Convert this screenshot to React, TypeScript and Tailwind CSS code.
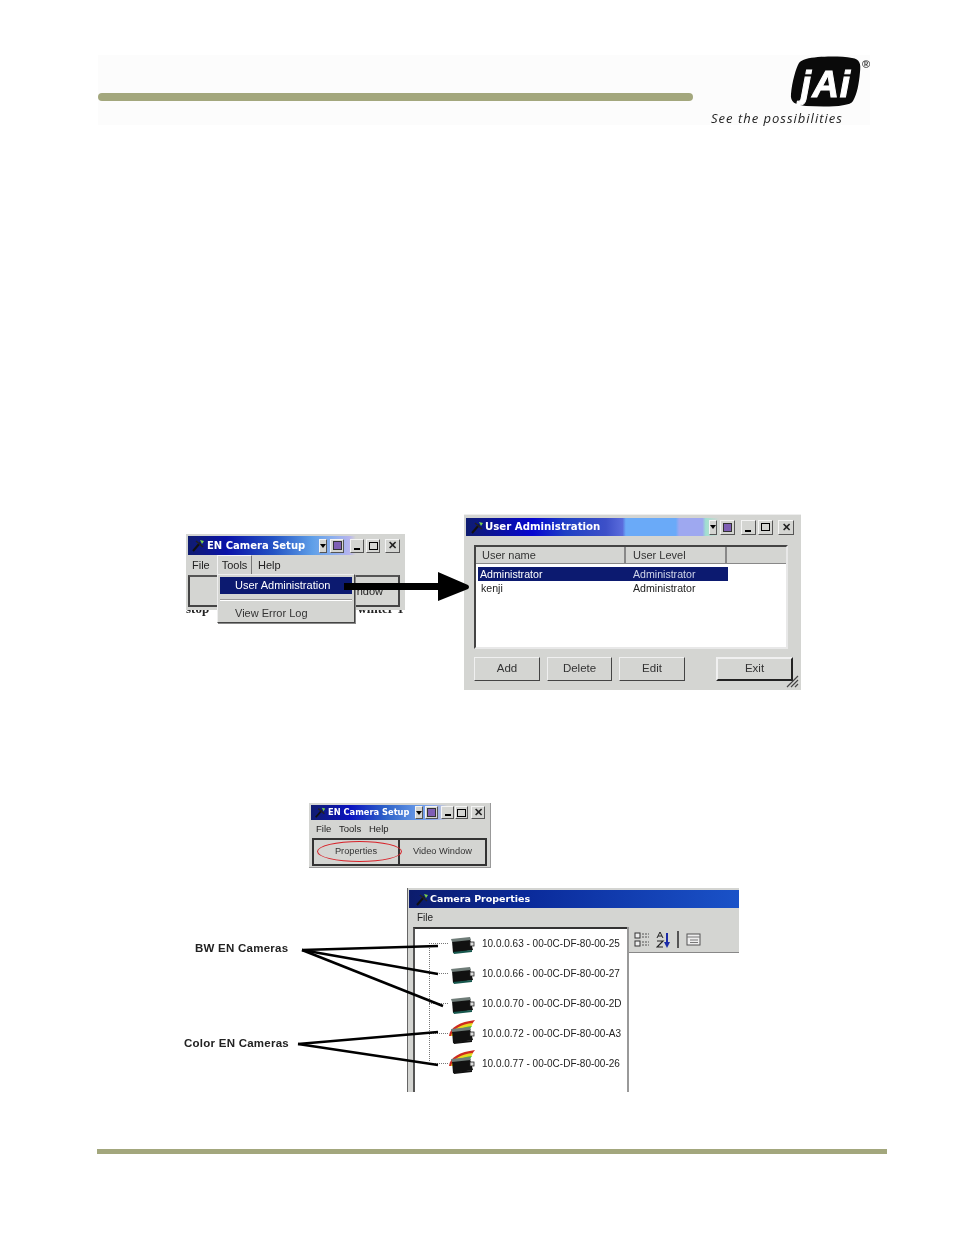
const ui = "font-['Liberation_Sans',Arial,sans-serif]";

function Sys({ small }: { small?: boolean }) {
  return (
    <svg width={small ? 13 : 15} height={small ? 13 : 15} viewBox="0 0 15 15" className="shrink-0">
      <path d="M2 13 L9 5" stroke="#111" strokeWidth="2" />
      <path d="M5 3 L12 9" stroke="#222" strokeWidth="1.6" />
      <path d="M9 2 L13 3 L11 6 Z" fill="#7ad04a" />
    </svg>
  );
}

function Ctl({ kind, w = 14, h = 14 }: { kind: 'min' | 'max' | 'close' | 'menu' | 'tile'; w?: number; h?: number }) {
  return (
    <div
      style={{ width: w, height: h }}
      className="relative flex items-center justify-center bg-[#d4d5d2] border border-t-[#f4f4f4] border-l-[#f4f4f4] border-r-[#555] border-b-[#555]"
    >
      {kind === 'min' && <div className="absolute bottom-[2px] left-[3px] w-[6px] h-[2px] bg-black" />}
      {kind === 'max' && <div className="w-[9px] h-[8px] border border-black" />}
      {kind === 'close' && <span className={`${ui} text-[11px] font-bold leading-none text-[#222]`}>✕</span>}
      {kind === 'menu' && <div className="w-0 h-0 border-x-[3px] border-x-transparent border-t-[4px] border-t-black" />}
      {kind === 'tile' && <div className="w-[9px] h-[9px] bg-[#7f5fb5] border border-[#333]" />}
    </div>
  );
}

function Controls({ size = 14, tight }: { size?: number; tight?: boolean }) {
  return (
    <div className="ml-auto flex items-center">
      <Ctl kind="menu" w={8} h={size} />
      <div className={tight ? 'w-[2px]' : 'w-[3px]'} />
      <Ctl kind="tile" w={size} h={size} />
      <div className={tight ? 'w-[3px]' : 'w-[6px]'} />
      <Ctl kind="min" w={size} h={size} />
      <div className={tight ? 'w-[1px]' : 'w-[2px]'} />
      <Ctl kind="max" w={size} h={size} />
      <div className={tight ? 'w-[3px]' : 'w-[5px]'} />
      <Ctl kind="close" w={size + 1} h={size} />
    </div>
  );
}

function Logo() {
  return (
    <div className="relative w-[80px] h-[52px]">
      <svg width="71" height="52" viewBox="0 0 71 52">
        <path
          d="M16 3 C28 0 50 0 62 2 C70 3 71 8 70 16 C69 28 67 38 63 45 C60 51 36 51 16 50 C5 49 0 46 1 38 C2 26 6 12 9 7 C10 5 13 4 16 3 Z"
          fill="#0a0a0a"
        />
        <text x="36" y="41" textAnchor="middle" fontFamily="'Liberation Sans', Arial, sans-serif" fontStyle="italic" fontWeight="900" fontSize="37" fill="#fff" letterSpacing="1" stroke="#fff" strokeWidth="1">
          jAi
        </text>
      </svg>
      <span className={`${ui} absolute right-0 top-[3px] text-[11px] font-bold leading-none text-[#333]`}>®</span>
    </div>
  );
}

function Header() {
  return (
    <div className="ml-[98px] mt-[55px] w-[772px] h-[70px] bg-[#fcfcfc] flex">
      <div className="w-[595px] pt-[38px]">
        <div className="h-[8px] rounded-full bg-[#a3a77d]" />
      </div>
      <div className="flex-1 relative flex flex-col items-end pt-[1px]">
        <Logo />
        <div className="absolute left-[18px] top-[54px] font-['Open_Sans',sans-serif] italic text-[13px] tracking-[1px] leading-[18px] text-[#222] whitespace-nowrap">
          See the possibilities
        </div>
      </div>
    </div>
  );
}

function SetupWindow() {
  return (
    <div className="relative w-[219px] h-[86px] mt-[20px]">
      <div className={`${ui} w-[219px] h-[76px] bg-[#d4d5d2] pt-[2px] px-[1px] text-[#222]`}>
        <div className="h-[19px] ml-[1px] mr-[1px] flex items-center pl-[3px] pr-[3px] bg-[linear-gradient(90deg,#101c70_0%,#0a12a8_18%,#2454c4_40%,#5f9fe8_58%,#8fb0ee_68%,#b6b4ee_75%,#d4d5d2_78%)]">
          <Sys />
          <span className="ml-[1px] font-['DejaVu_Sans',sans-serif] font-bold text-[10px] text-white whitespace-nowrap">EN Camera Setup</span>
          <Controls />
        </div>
        <div className="flex h-[20px] items-center text-[11px] pl-[5px]">
          <span className="w-[25px]">File</span>
          <span className="w-[35px] h-[20px] flex items-center justify-center border border-t-[#f4f4f4] border-l-[#f4f4f4] border-r-[#777] border-b-transparent">Tools</span>
          <span className="ml-[6px]">Help</span>
        </div>
        <div className="flex ml-[1px] mr-[4px] h-[32px] border-2 border-[#444] border-t-[#555] bg-[#d4d5d2] justify-end items-end pr-[15px] pb-[6px] text-[11px]">
          indow
        </div>
      </div>
      <div className="h-[9px] overflow-hidden">
        <div className="-mt-[8px] font-['Liberation_Serif',serif] font-bold text-[13px] leading-[14px] text-[#222] flex justify-between">
          <span>stop</span>
          <span>winter T</span>
        </div>
      </div>
      <div className={`${ui} absolute left-[31px] top-[40px] w-[138px] h-[49px] bg-[#d4d5d2] border border-[#eee] border-r-[#444] border-b-[#444] p-[2px] text-[11px] text-[#333] shadow-[1px_1px_0_#888]`}>
        <div className="h-[17px] bg-[#0c1a70] text-white pl-[15px] leading-[17px]">User Administration</div>
        <div className="mt-[5px] border-t border-t-[#999] border-b border-b-white" />
        <div className="pl-[15px] mt-[4px]">View Error Log</div>
      </div>
    </div>
  );
}

function UserAdminWindow() {
  const Btn = ({ label, w, exit }: { label: string; w: number; exit?: boolean }) => (
    <div
      style={{ width: w }}
      className={`h-[24px] flex items-center justify-center text-[11.5px] border border-t-[#f0f0f0] border-l-[#f0f0f0] ${exit ? 'border-2 border-[#222] border-t-[#333] border-l-[#333]' : 'border-r-[#444] border-b-[#444]'}`}
    >
      {label}
    </div>
  );
  return (
    <div className={`${ui} relative w-[337px] h-[176px] bg-[#d4d5d2] pt-[3px] px-[2px] text-[#333] border-t border-t-[#eee]`}>
      <div className="h-[18px] flex items-center pl-[4px] pr-[5px] bg-[linear-gradient(90deg,#0e1c70_0%,#0606d0_20%,#1e40c4_30%,#3d50c8_42%,#5a6cdc_47%,#6aaaf8_48%,#6aaaf8_63%,#9ea8f0_64%,#9ea8f0_71%,#a0e0d0_72%,#d4d5d2_76%)]">
        <Sys />
        <span className="font-['DejaVu_Sans',sans-serif] font-bold text-[10.2px] text-white whitespace-nowrap">User Administration</span>
        <Controls size={15} />
      </div>
      <div className="mt-[9px] ml-[8px] w-[314px] h-[104px] bg-white border-2 border-[#444] border-r-[#e8e8e8] border-b-[#e8e8e8]">
        <div className="flex h-[17px] bg-[#d4d5d2] text-[11px] leading-[17px]">
          <div className="w-[150px] pl-[6px] border-r-2 border-r-[#888] border-b border-b-[#888]">User name</div>
          <div className="w-[101px] pl-[7px] border-r-2 border-r-[#888] border-b border-b-[#888]">User Level</div>
          <div className="flex-1 border-b border-b-[#888]" />
        </div>
        <div className="ml-[2px] mt-[3px] w-[250px] h-[14px] bg-[#0c1a70] text-white flex text-[10.6px] leading-[14px]">
          <span className="w-[155px] pl-[2px]">Administrator</span>
          <span className="text-[#cfd4e8]">Administrator</span>
        </div>
        <div className="ml-[2px] h-[14px] flex text-[10.6px] leading-[15px] text-[#222]">
          <span className="w-[155px] pl-[3px]">kenji</span>
          <span>Administrator</span>
        </div>
      </div>
      <div className="flex mt-[8px] ml-[8px]">
        <Btn label="Add" w={66} />
        <div className="w-[7px]" />
        <Btn label="Delete" w={65} />
        <div className="w-[7px]" />
        <Btn label="Edit" w={66} />
        <div className="w-[31px]" />
        <Btn label="Exit" w={77} exit />
      </div>
      <svg className="absolute right-[2px] bottom-[2px]" width="14" height="14" viewBox="0 0 14 14">
        <path d="M13 2 L2 13 M13 6 L6 13 M13 10 L10 13" stroke="#444" strokeWidth="1.2" />
      </svg>
    </div>
  );
}

function SmallSetupWindow() {
  return (
    <div className={`${ui} ml-[309px] mt-[113px] w-[182px] h-[65px] bg-[#d4d5d2] p-[2px] border-r border-b border-r-[#999] border-b-[#999] text-[#222]`}>
      <div className="h-[15px] flex items-center pl-[3px] pr-[3px] bg-[linear-gradient(90deg,#101c70_0%,#0a12c0_22%,#2e62c8_42%,#6a9cea_62%,#8fa8ee_70%,#d4d5d2_77%)]">
        <Sys small />
        <span className="ml-[1px] font-['DejaVu_Sans',sans-serif] font-bold text-[8.3px] text-white whitespace-nowrap">EN Camera Setup</span>
        <Controls size={13} tight />
      </div>
      <div className="flex h-[18px] items-center text-[9.5px] pl-[5px]">
        <span className="w-[23px]">File</span>
        <span className="w-[30px]">Tools</span>
        <span>Help</span>
      </div>
      <div className="relative flex h-[28px] mx-[1px] border-2 border-[#333] text-[9.25px]">
        <div className="w-[86px] flex items-center justify-center border-r-2 border-r-[#333] text-[#333]">Properties</div>
        <div className="flex-1 flex items-center justify-center text-[#333]">Video Window</div>
        <div className="absolute left-[3px] top-[1px] w-[85px] h-[21px] rounded-[50%] border border-[#d8232a]" />
      </div>
    </div>
  );
}

function Camera({ color }: { color?: boolean }) {
  return (
    <svg width="28" height="26" viewBox="0 0 28 26" className="shrink-0">
      {color && (
        <>
          <path d="M1 17 C2 8 12 3 27 1 L24 5 C14 6 7 10 5 17 Z" fill="#d02a1e" />
          <path d="M3 17 C5 10 13 5 25 4 L23 8 C15 9 9 12 7 17 Z" fill="#e8d820" />
          <path d="M5 17 C7 12 14 8 24 7 L21 11 C15 11 11 13 9 17 Z" fill="#3ec43a" />
          <path d="M8 17 C11 13 16 12 21 11 L20 14 C15 14 12 15 11 17 Z" fill="#55a8e0" />
        </>
      )}
      <path d="M4 12 L22 10 L25 21 L5 24 Z" fill="#111" />
      <path d="M3 10 L22 8 L23 11 L4 13 Z" fill="#6f7c78" />
      <path d="M5 23 L24 21 L24 23 L6 25 Z" fill={color ? '#111' : '#17584e'} />
      <rect x="22" y="13" width="4" height="4" fill="#ddd" stroke="#222" strokeWidth="0.8" />
    </svg>
  );
}

const cameras = [
  { label: '10.0.0.63 - 00-0C-DF-80-00-25' },
  { label: '10.0.0.66 - 00-0C-DF-80-00-27' },
  { label: '10.0.0.70 - 00-0C-DF-80-00-2D' },
  { label: '10.0.0.72 - 00-0C-DF-80-00-A3', color: true },
  { label: '10.0.0.77 - 00-0C-DF-80-00-26', color: true },
];

function PropertiesWindow() {
  return (
    <div className={`${ui} w-[332px] h-[204px] shrink-0 bg-[#d4d5d2] border-l border-l-[#666] pl-[1px] pt-[2px] text-[#222] overflow-hidden`}>
      <div className="h-[18px] flex items-center pl-[6px] bg-[linear-gradient(90deg,#0c1c6c_0%,#0a2a9a_35%,#1a52c8_100%)]">
        <Sys />
        <span className="font-['DejaVu_Sans',sans-serif] font-bold text-[9.5px] text-white whitespace-nowrap">Camera Properties</span>
      </div>
      <div className="h-[19px] text-[10px] leading-[19px] pl-[8px]">File</div>
      <div className="flex h-[165px] pl-[4px]">
        <div className="relative w-[214px] bg-white border-t-2 border-l-2 border-t-[#333] border-l-[#555]">
          <div className="absolute left-[14px] top-[16px] h-[116px] border-l border-dotted border-l-[#777]" />
          {cameras.map((c) => (
            <div key={c.label} className="h-[30px] flex items-center pl-[14px] relative -top-[1px]">
              <div className="w-[19px] border-t border-dotted border-t-[#777]" />
              <div className="-mt-[3px]"><Camera color={c.color} /></div>
              <span className="ml-[6px] text-[10px] whitespace-nowrap text-[#222]">{c.label}</span>
            </div>
          ))}
        </div>
        <div className="w-[2px] bg-[#999]" />
        <div className="flex-1 flex flex-col">
          <div className="h-[25px] flex items-center pl-[4px] gap-[5px]">
            <svg width="18" height="18" viewBox="0 0 18 18">
              <rect x="2" y="2" width="5" height="5" fill="#eee" stroke="#333" />
              <rect x="2" y="10" width="5" height="5" fill="#eee" stroke="#333" />
              <path d="M9 3h7M9 6h7M9 11h7M9 14h7" stroke="#555" strokeDasharray="2 1" />
            </svg>
            <svg width="16" height="18" viewBox="0 0 16 18">
              <path d="M4 1 L1 7 M4 1 L7 7 M2 5 H6" stroke="#222" strokeWidth="1" fill="none" />
              <path d="M1 10 H7 L1 16 H7" stroke="#222" strokeWidth="1.2" fill="none" />
              <path d="M11 2 V12" stroke="#1a2aa8" strokeWidth="2" />
              <path d="M8 11 H14 L11 17 Z" fill="#1a2aa8" />
            </svg>
            <div className="w-[2px] h-[17px] bg-[#555]" />
            <svg width="16" height="14" viewBox="0 0 16 14" className="ml-[2px]">
              <rect x="1" y="1" width="13" height="11" fill="#eee" stroke="#555" />
              <path d="M1 4 H14 M4 7 H12 M4 9.5 H12" stroke="#777" />
            </svg>
          </div>
          <div className="flex-1 bg-white border-t border-t-[#888]" />
        </div>
      </div>
    </div>
  );
}

function CameraFigure() {
  return (
    <div className="relative ml-[184px] mt-[20px] w-[555px] h-[204px] flex">
      <div className={`${ui} w-[223px] shrink-0 font-bold text-[11.5px] tracking-[0.25px] text-[#222]`}>
        <div className="mt-[52px] ml-[11px] leading-[16px]">BW EN Cameras</div>
        <div className="mt-[79px] leading-[16px]">Color EN Cameras</div>
      </div>
      <PropertiesWindow />
      {/* leader lines run over both the labels and the window */}
      <svg className="absolute left-0 top-0 pointer-events-none" width="555" height="204" viewBox="0 0 555 204">
        <g stroke="#000" strokeWidth="2.6" fill="none">
          <path d="M118 62 L254 58" />
          <path d="M118 62 L254 86" />
          <path d="M118 62 L259 118" />
          <path d="M114 156 L254 144" />
          <path d="M114 156 L254 177" />
        </g>
      </svg>
    </div>
  );
}

export default function App() {
  return (
    <div className="relative w-[954px] h-[1235px] bg-white overflow-hidden blur-[0.3px]">
      <Header />
      <div className="relative mt-[389px] ml-[186px] flex items-start gap-[59px]">
        <SetupWindow />
        <UserAdminWindow />
        <svg className="absolute left-[158px] top-[55px]" width="128" height="36" viewBox="0 0 128 36">
          <path d="M0 14 H94 V3 L124 16 Q126 18 124 20 L94 32 V21 H0 Z" fill="#000" />
        </svg>
      </div>
      <SmallSetupWindow />
      <CameraFigure />
      <div className="ml-[97px] mt-[57px] w-[790px] h-[5px] bg-[#a3a77d]" />
    </div>
  );
}
